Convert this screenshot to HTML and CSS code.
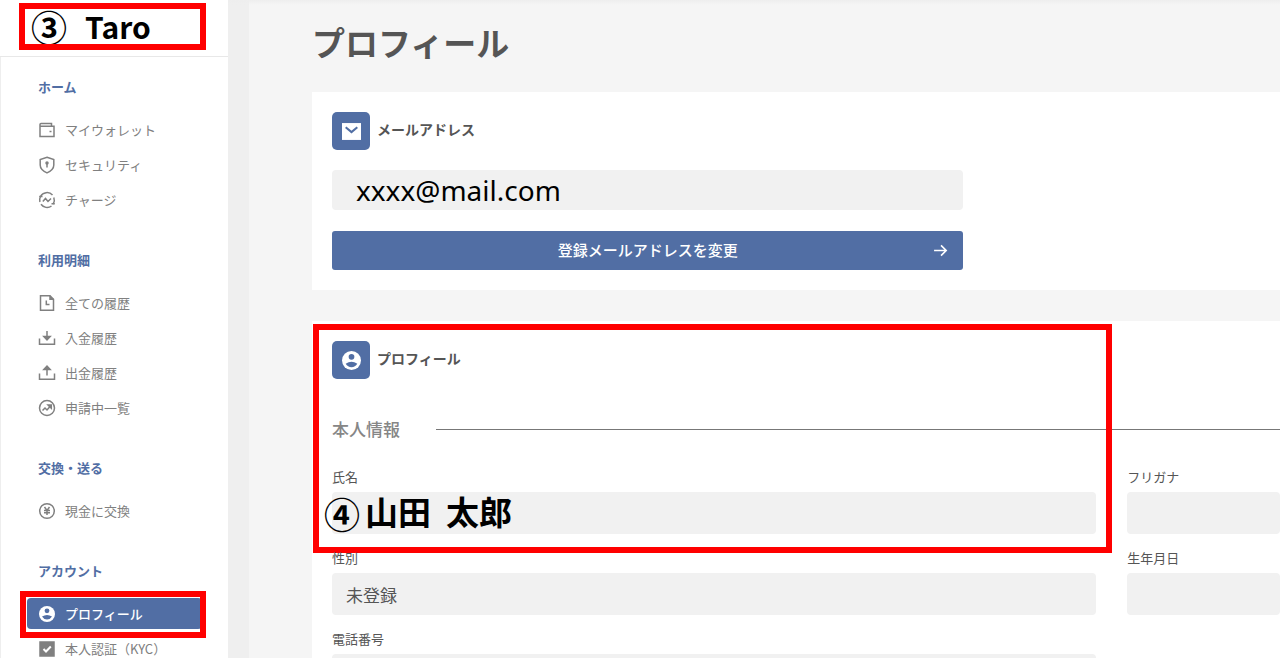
FILE: index.html
```html
<!DOCTYPE html>
<html lang="ja">
<head>
<meta charset="UTF-8">
<meta name="viewport" content="width=device-width, initial-scale=1.0">
<title>プロフィール</title>
<link rel="stylesheet" href="styles.css">
</head>
<body>

<div class="page">
  <aside class="sidebar">
    <div class="user">
      <span class="step">③</span>
      <span class="user-name">Taro</span>
      <div class="mark mark-user"></div>
    </div>

    <nav class="menu">
      <section>
        <h2>ホーム</h2>
        <ul>
          <li><a href="#"><svg viewBox="0 0 18 18"><path d="M2 15.5V3.500q0-1 1-1h10.500v2.500M2 5.300h14v10.200H2z"/><path d="M11.500 10.500h2"/></svg>マイウォレット</a></li>
          <li><a href="#"><svg viewBox="0 0 18 18"><path d="M9 1.200 15.800 3.500v5.500c0 3.700-3.300 6.300-6.800 7.900-3.500-1.600-6.800-4.200-6.800-7.900V3.500z"/><path d="M9 7v4.500"/><circle cx="9" cy="7" r="1" class="solid"/></svg>セキュリティ</a></li>
          <li><a href="#"><svg viewBox="0 0 18 18"><path d="M2.500 5.500a7.400 7.400 0 0 1 12-1.500M15.800 6.500a7.300 7.300 0 0 1-.600 6.500M13.500 15a7.400 7.400 0 0 1-10.500-1.700M1.900 11a7.300 7.300 0 0 1 .600-5.500"/><path d="M1.200 5.500h3.300M16.800 12.800h-3.300"/><path d="m4.800 10.500 2.700-3 2.500 3 3-3"/></svg>チャージ</a></li>
        </ul>
      </section>

      <section>
        <h2>利用明細</h2>
        <ul>
          <li><a href="#"><svg viewBox="0 0 18 18"><path d="M2.500 1.800h9.500l3.500 3.500v11h-13z"/><path d="M8.300 6.500v4h3.200"/><path d="M12 1.800v3.500h3.500" class="solid"/></svg>全ての履歴</a></li>
          <li><a href="#"><svg viewBox="0 0 18 18"><path d="M1.500 9.500v5.800h15V9.500M9 2v8.500"/><path d="m5.800 7.500 3.200 3.500 3.200-3.500z" class="solid"/></svg>入金履歴</a></li>
          <li><a href="#"><svg viewBox="0 0 18 18"><path d="M1.500 9.500v5.800h15V9.500M9 11.500V3"/><path d="m5.800 5.500 3.200-3.500 3.200 3.500z" class="solid"/></svg>出金履歴</a></li>
          <li><a href="#"><svg viewBox="0 0 18 18"><circle cx="9" cy="9" r="7.500"/><path d="m4.500 11.500 2.500-2.500 2 2 3.500-4"/><path d="M10 6h3.300v3.300z" class="solid"/></svg>申請中一覧</a></li>
        </ul>
      </section>

      <section>
        <h2>交換・送る</h2>
        <ul>
          <li><a href="#"><svg viewBox="0 0 18 18"><circle cx="9" cy="9" r="7.300"/><path d="m6.500 5 2.500 3.500L11.500 5M9 8.500V13M6 8.500h6M6 10.800h6"/></svg>現金に交換</a></li>
        </ul>
      </section>

      <section>
        <h2>アカウント</h2>
        <ul>
          <li class="current"><a href="#"><svg viewBox="0 0 18 18"><circle cx="9" cy="9" r="8" class="disc"/><circle cx="9" cy="5.800" r="2.400" class="cut"/><path d="M4 11.500q5-3 10 0-1.800 3-5 3t-5-3z" class="cut"/></svg>プロフィール</a><div class="mark mark-item"></div></li>
          <li><a href="#"><svg viewBox="0 0 18 18"><rect x="2" y="2" width="14" height="14" class="solid"/><path d="m5.500 9 2.500 2.500 4.800-5" class="tick"/></svg>本人認証（KYC）</a></li>
        </ul>
      </section>
    </nav>
  </aside>

  <main class="content">
    <h1>プロフィール</h1>

    <section class="panel">
      <h2 class="panel-title">
        <span class="badge"><svg viewBox="0 0 18 18"><path d="M0 1h18v16H0z" class="disc"/><path d="m3.500 5 5.500 4.500 5.500-4.500" class="flap"/></svg></span>
        <label for="email">メールアドレス</label>
      </h2>
      <div class="email">
        <input type="text" id="email" value="xxxx@mail.com" readonly>
        <button type="button">登録メールアドレスを変更
          <svg viewBox="0 0 14 14"><path d="M1 7h11M7.500 2.200 12.300 7l-4.800 4.800"/></svg>
        </button>
      </div>
    </section>

    <section class="panel">
      <div class="mark mark-profile"></div>
      <h2 class="panel-title">
        <span class="badge"><svg viewBox="0 0 18 18"><circle cx="9" cy="9" r="9" class="disc"/><circle cx="9" cy="5.500" r="2.700" class="cut"/><path d="M3.500 12q5.500-3.500 11 0-2 3.300-5.500 3.300T3.500 12z" class="cut"/></svg></span>
        プロフィール
      </h2>
      <h3>本人情報</h3>
      <form class="fields">
        <div class="field">
          <label for="name">氏名</label>
          <span class="step step-name">④</span>
          <input type="text" id="name" class="name" value="山田  太郎" readonly>
        </div>
        <div class="field">
          <label for="kana">フリガナ</label>
          <input type="text" id="kana" readonly>
        </div>
        <div class="field">
          <label for="gender">性別</label>
          <input type="text" id="gender" value="未登録" readonly>
        </div>
        <div class="field">
          <label for="birthday">生年月日</label>
          <input type="text" id="birthday" readonly>
        </div>
        <div class="field">
          <label for="tel">電話番号</label>
          <input type="text" id="tel" readonly>
        </div>
      </form>
    </section>
  </main>
</div>

</body>
</html>
```

FILE: styles.css
```css
* {
  box-sizing: border-box;
}
body {
  margin: 0;
  font-family: "Noto Sans CJK JP", "Noto Sans", sans-serif;
  color: #555;
}
h1, h2, h3, ul {
  margin: 0;
  padding: 0;
}
ul {
  list-style: none;
}
svg {
  fill: none;
  stroke: currentColor;
  stroke-width: 1.5;
}
.solid {
  fill: currentColor;
}
.disc {
  fill: #fff;
  stroke: none;
}
.cut {
  fill: #516ea4;
  stroke: none;
}
.tick {
  stroke: #fff;
  stroke-width: 2;
}
.page {
  display: flex;
  height: 100vh;
  overflow: hidden;
}

/* sidebar */
.sidebar {
  flex: 0 0 228px;
  background: #fff;
}
.user {
  position: relative;
  display: flex;
  align-items: center;
  gap: 18px;
  height: 57px;
  padding: 0 0 4px 31px;
  border-bottom: 1px solid #e8e8e8;
  color: #000;
}
.step {
  font-size: 36px;
  line-height: 36px;
  font-weight: bold;
  color: #000;
}
.user-name {
  font-size: 30px;
  line-height: 40px;
  font-weight: bold;
}
.menu {
  height: 100%;
  padding: 19px 26px;
  border-left: 1px solid #eee;
}
.menu section {
  margin-bottom: 34px;
}
.menu h2 {
  margin: 0 0 17px 11px;
  font-size: 13px;
  line-height: 21px;
  color: #516ea4;
}
.menu li {
  position: relative;
  margin-bottom: 4px;
}
.menu li:last-child {
  margin-bottom: 0;
}
.menu a {
  display: flex;
  align-items: center;
  gap: 9px;
  height: 31px;
  padding-left: 11px;
  border-radius: 4px;
  font-size: 13px;
  color: #808080;
  text-decoration: none;
}
.menu svg {
  width: 18px;
  height: 18px;
}
.menu .current a {
  background: #516ea4;
  color: #fff;
  font-weight: 500;
}

/* red frames */
.mark {
  position: absolute;
  border: 6px solid #f00;
  pointer-events: none;
}
.mark-user {
  inset: 3px 22px 6px 19px;
}
.mark-item {
  inset: -7px -4px -9px -7px;
}
.mark-profile {
  top: 3px;
  left: 1px;
  right: 168px;
  height: 229px;
}

/* content */
.content {
  flex: 1;
  min-width: 0;
  padding: 20px 0 0 84px;
  background:
    linear-gradient(#eee, #eee0) 0 0 / 100% 5px no-repeat,
    linear-gradient(#efefef, #efefef) 0 0 / 21px 100% no-repeat,
    #f5f5f5;
}
h1 {
  margin-bottom: 28px;
  font-size: 33px;
  line-height: 44px;
}
.panel {
  position: relative;
  margin-bottom: 31px;
  padding: 20px 0 20px 20px;
  background: #fff;
}
.panel-title {
  display: flex;
  gap: 7px;
  height: 38px;
  font-size: 14px;
  line-height: 34px;
}
.badge {
  display: flex;
  align-items: center;
  justify-content: center;
  width: 38px;
  height: 38px;
  border-radius: 5px;
  background: #516ea4;
}
.badge svg {
  width: 19px;
  height: 19px;
}
.flap {
  stroke: #516ea4;
  stroke-width: 2;
}
input {
  display: block;
  width: 100%;
  height: 42px;
  padding: 0 14px;
  border: none;
  border-radius: 4px;
  background: #f1f1f1;
  font-family: inherit;
  font-size: 17px;
  color: #555;
}
.email {
  width: 66.6%;
  margin-top: 20px;
}
.email input {
  height: 40px;
  padding: 0 24px;
  font-family: "Noto Sans", sans-serif;
  font-size: 28px;
  color: #000;
}
button {
  position: relative;
  display: block;
  width: 100%;
  height: 39px;
  margin-top: 21px;
  padding: 0 0 2px;
  border: none;
  border-radius: 3px;
  background: #516ea4;
  font-family: inherit;
  font-size: 15px;
  font-weight: 500;
  color: #fff;
}
button svg {
  position: absolute;
  top: 12px;
  right: 15px;
  width: 15px;
  height: 15px;
}
h3 {
  display: flex;
  align-items: center;
  gap: 36px;
  margin: 38px 0 26px;
  font-size: 17px;
  line-height: 24px;
  font-weight: 500;
  color: #868686;
}
h3::after {
  content: "";
  flex: 1;
  border-top: 1px solid #777;
}
.fields {
  display: grid;
  grid-template-columns: 5fr 1fr;
  gap: 14px 31px;
}
.field {
  position: relative;
  min-width: 0;
}
.field label {
  display: block;
  margin-bottom: 5px;
  font-size: 13px;
  line-height: 20px;
}
.step-name {
  position: absolute;
  top: 28px;
  left: -8px;
}
.field .name {
  padding: 0 0 4px 33px;
  font-size: 33px;
  font-weight: bold;
  color: #000;
}
```
